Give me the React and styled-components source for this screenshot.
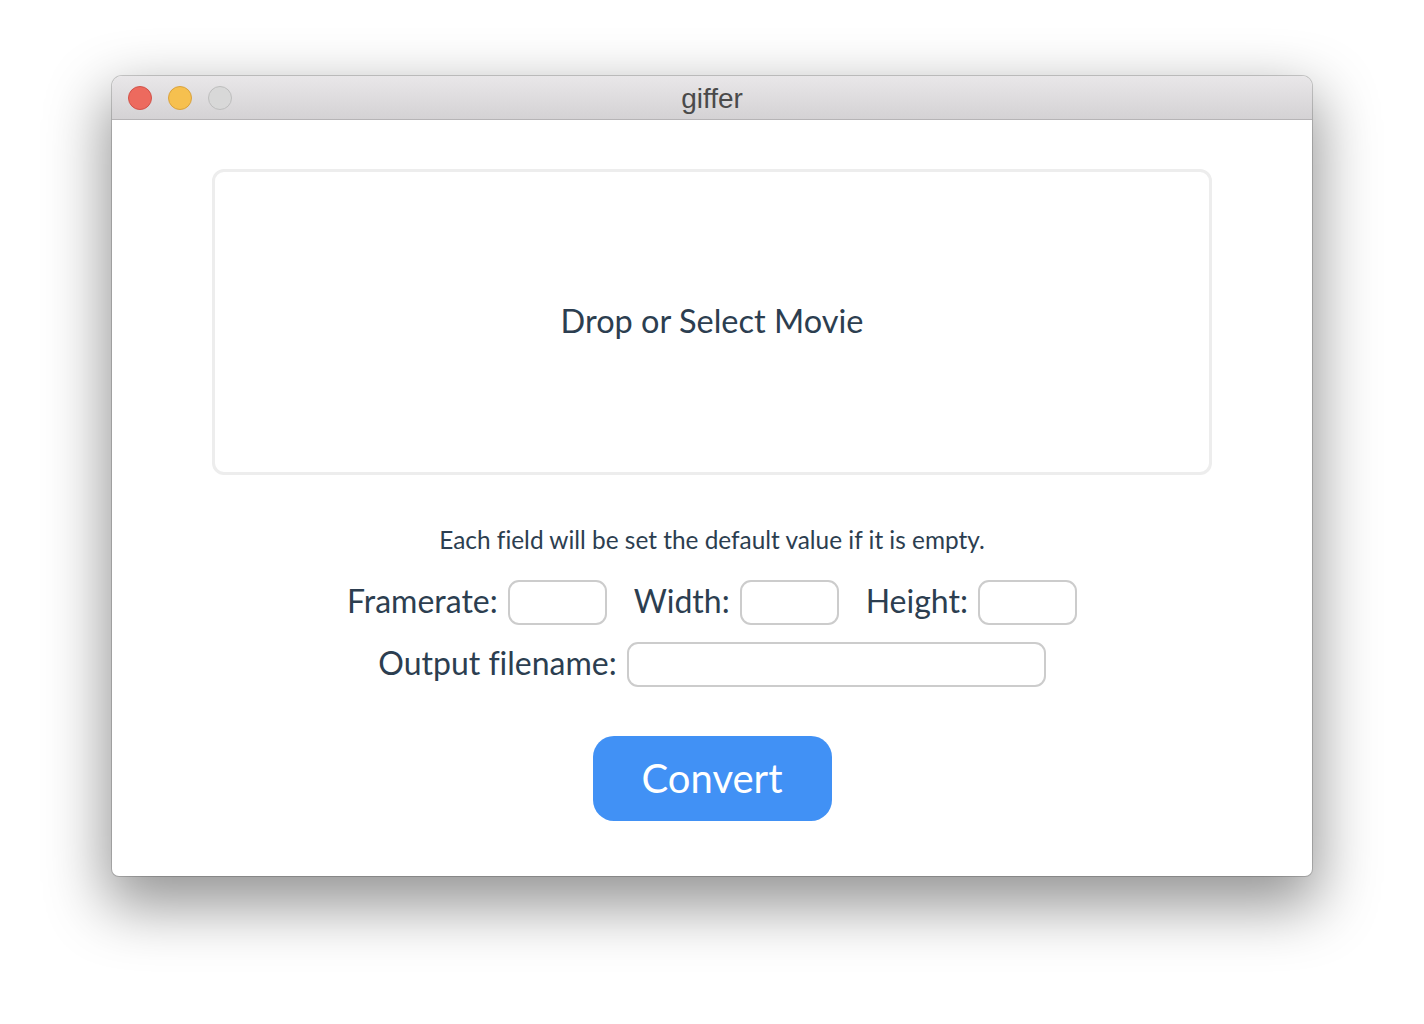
import styled, { createGlobalStyle } from "styled-components";

const GlobalStyle = createGlobalStyle`
  html, body {
    margin: 0;
    padding: 0;
    background: #ffffff;
  }
  body {
    font-family: Lato, "Noto Sans", sans-serif;
    font-variant-ligatures: none;
  }
`;

const Page = styled.div`
  width: 1424px;
  height: 1024px;
  display: flex;
  justify-content: center;
  padding-top: 76px;
  box-sizing: border-box;
`;

const Window = styled.div`
  width: 1200px;
  height: 800px;
  display: flex;
  flex-direction: column;
  border-radius: 10px 10px 7px 7px;
  overflow: hidden;
  background: #fff;
  box-shadow: 0 0 0 1px rgba(0, 0, 0, 0.18), 0 24px 60px 6px rgba(0, 0, 0, 0.42);
`;

const TitleBar = styled.div`
  position: relative;
  height: 43px;
  flex-shrink: 0;
  display: flex;
  align-items: center;
  justify-content: center;
  background: linear-gradient(#e9e7e9, #d4d2d4);
  border-bottom: 1px solid #b6b4b6;
`;

const Lights = styled.div`
  position: absolute;
  left: 16px;
  top: 10px;
  display: flex;
  gap: 16px;
`;

const Light = styled.span`
  width: 24px;
  height: 24px;
  border-radius: 50%;
  box-sizing: border-box;
  background: ${(p) => p.$bg};
  border: 1px solid ${(p) => p.$edge};
`;

const Title = styled.div`
  font-family: "Liberation Sans", Arial, sans-serif;
  font-size: 28px;
  color: #4a4a4a;
  padding-top: 2px;
`;

const Content = styled.div`
  flex: 1;
  display: flex;
  flex-direction: column;
  align-items: center;
  padding: 49px 100px 0;
  color: #2c3e50;
`;

const DropZone = styled.div`
  width: 100%;
  height: 306px;
  box-sizing: border-box;
  border: 3px solid #ededed;
  border-radius: 12px;
  display: flex;
  align-items: center;
  justify-content: center;
  font-size: 32.5px;
  padding-bottom: 4px;
  cursor: pointer;
`;

const Hint = styled.p`
  margin: 49px 0 0;
  font-size: 24.4px;
  line-height: 32px;
`;

const Row = styled.div`
  display: flex;
  align-items: center;
  margin-top: ${(p) => p.$top}px;
`;

const Label = styled.label`
  font-size: 32px;
  margin: 0 10px 0 ${(p) => p.$gap || 0}px;
  padding-bottom: 4px;
`;

const Input = styled.input`
  width: ${(p) => p.$w}px;
  height: 45px;
  box-sizing: border-box;
  border: 2px solid #cccccc;
  border-radius: 11px;
  outline: none;
  font-size: 22px;
  padding: 0 10px;
`;

const Convert = styled.button`
  margin-top: 49px;
  width: 239px;
  height: 85px;
  border: none;
  border-radius: 21px;
  background: #4191f5;
  color: #fff;
  font-family: Lato, sans-serif;
  font-size: 40px;
  padding-bottom: 3px;
  cursor: pointer;
`;

export default function App() {
  return (
    <Page>
      <GlobalStyle />
      <Window>
        <TitleBar>
          <Lights>
            <Light $bg="#ed6a5e" $edge="#d1524a" />
            <Light $bg="#f6c04f" $edge="#d9a23e" />
            <Light $bg="#d8d8d8" $edge="#bdbdbd" />
          </Lights>
          <Title>giffer</Title>
        </TitleBar>
        <Content>
          <DropZone>Drop or Select Movie</DropZone>
          <Hint>Each field will be set the default value if it is empty.</Hint>
          <Row $top={24}>
            <Label>Framerate:</Label>
            <Input $w={99} />
            <Label $gap={27}>Width:</Label>
            <Input $w={99} />
            <Label $gap={27}>Height:</Label>
            <Input $w={99} />
          </Row>
          <Row $top={17}>
            <Label>Output filename:</Label>
            <Input $w={419} />
          </Row>
          <Convert>Convert</Convert>
        </Content>
      </Window>
    </Page>
  );
}
